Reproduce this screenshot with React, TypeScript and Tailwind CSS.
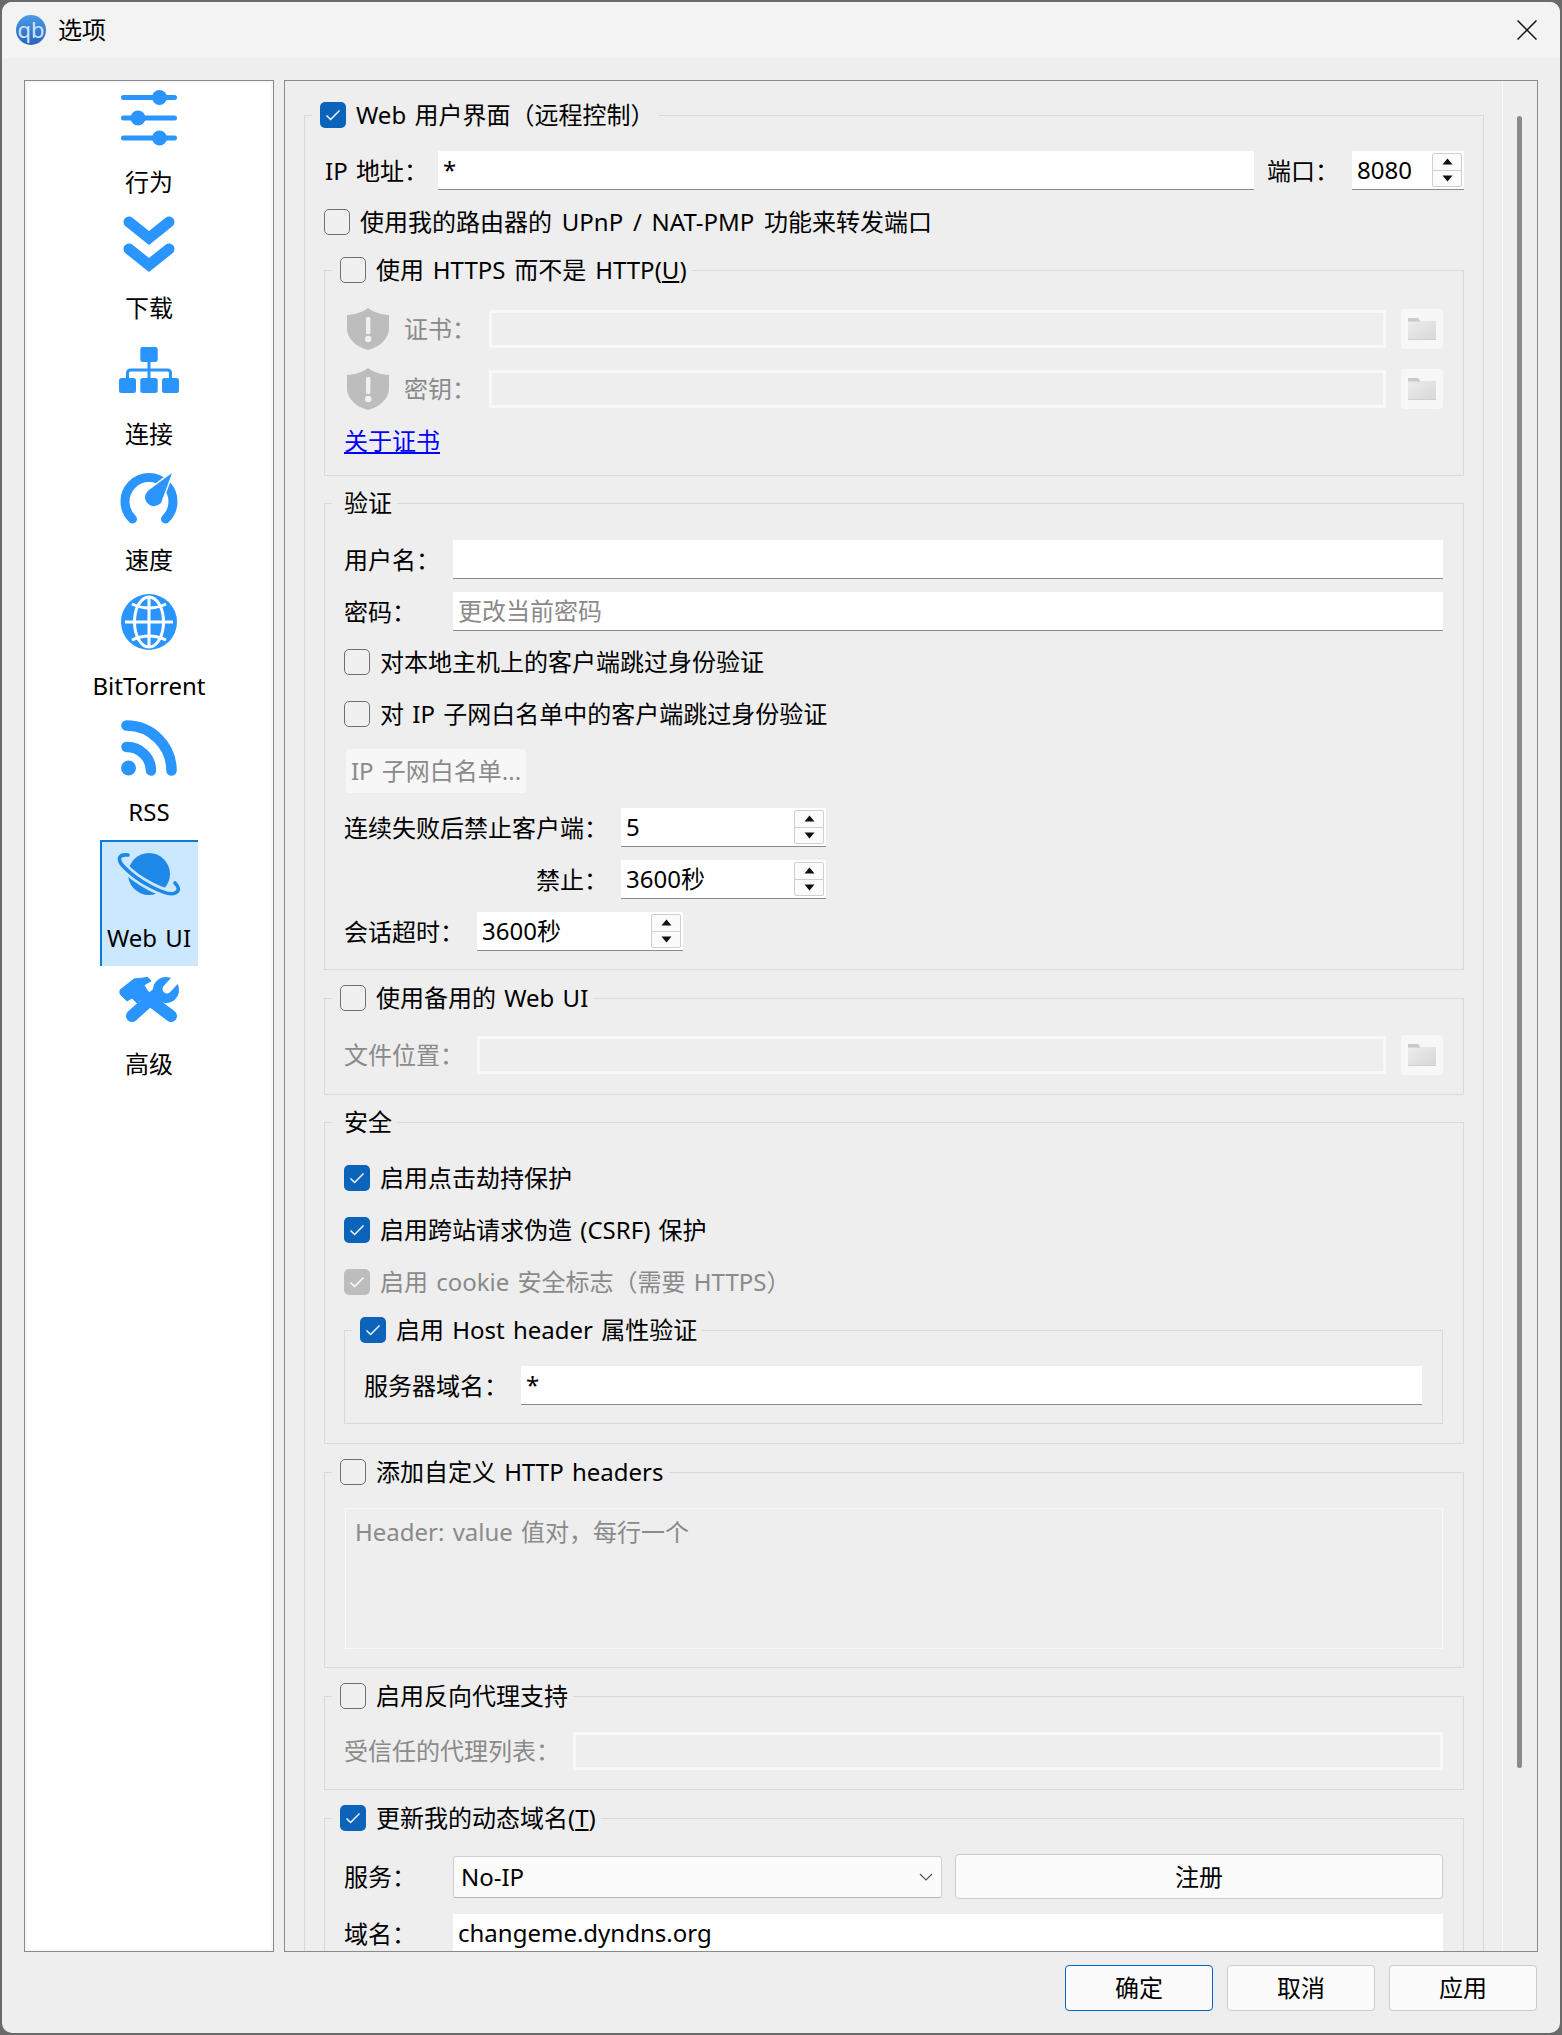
import React from "react";

const BLUE = "#2a94ff";

function Check({ on, disabled }: { on?: boolean; disabled?: boolean }) {
  if (on) {
    return (
      <span className={`flex h-[26px] w-[26px] shrink-0 items-center justify-center rounded-[5px] ${disabled ? "bg-[#bdbdbd]" : "bg-[#0b63ba]"}`}>
        <svg width="16" height="12" viewBox="0 0 16 12" fill="none" stroke="#fff" strokeWidth="1.4">
          <path d="M1.5 6.5L5.6 10.5L14.5 1.5" />
        </svg>
      </span>
    );
  }
  return <span className="block h-[26px] w-[26px] shrink-0 rounded-[5px] border-[1.5px] border-[#707070] bg-[#f0f0f0]" />;
}

function CheckRow({ on, disabled, children, className }: { on?: boolean; disabled?: boolean; children: React.ReactNode; className?: string }) {
  return (
    <div className={`flex h-[26px] items-center ${className ?? ""}`}>
      <Check on={on} disabled={disabled} />
      <span className={`ml-[10px] whitespace-nowrap ${disabled ? "text-[#8a8a8a]" : ""}`}>{children}</span>
    </div>
  );
}

function Group({ title, check, on, className, children }: { title: React.ReactNode; check?: boolean; on?: boolean; className?: string; children: React.ReactNode }) {
  return (
    <fieldset className={`min-w-0 border border-[#d9d9d9] ${className ?? ""}`}>
      <legend className={`ml-[7px] flex h-[26px] items-center pr-[5px] ${check ? "pl-[8px]" : "pl-[12px]"}`}>
        {check && <Check on={on} />}
        <span className={`whitespace-nowrap ${check ? "ml-[10px]" : ""}`}>{title}</span>
      </legend>
      <div className="pl-[19px] pr-[20px]">{children}</div>
    </fieldset>
  );
}

function Field({ text, placeholder, className }: { text?: string; placeholder?: string; className?: string }) {
  return (
    <div className={`flex h-[39px] items-center border-b border-[#8a8a8a] bg-white pl-[5px] ${placeholder ? "text-[#8a8a8a]" : ""} ${className ?? ""}`}>
      {text ?? placeholder}
    </div>
  );
}

function DisabledField({ className }: { className?: string }) {
  return <div className={`h-[38px] border-[3px] border-[#f8f8f8] bg-[#eeeeee] ${className ?? ""}`} />;
}

function Spin({ text, className }: { text: string; className?: string }) {
  return (
    <div className={`flex h-[39px] items-center justify-between border-b border-[#8a8a8a] bg-white pl-[5px] pr-[2px] ${className ?? ""}`}>
      <span>{text}</span>
      <div className="flex h-[34px] w-[30px] flex-col rounded-[2px] border border-[#cfcfcf] bg-[#fbfbfb]">
        <div className="flex flex-1 items-center justify-center border-b border-[#cfcfcf]">
          <svg width="11" height="7" viewBox="0 0 11 7"><path d="M5.5 0.5L10.5 6.5H0.5Z" fill="#111" /></svg>
        </div>
        <div className="flex flex-1 items-center justify-center">
          <svg width="11" height="7" viewBox="0 0 11 7"><path d="M5.5 6.5L10.5 0.5H0.5Z" fill="#111" /></svg>
        </div>
      </div>
    </div>
  );
}

function FolderButton({ className }: { className?: string }) {
  return (
    <div className={`ml-[15px] flex h-[40px] w-[42px] shrink-0 items-center justify-center rounded-[4px] bg-[#f7f7f7] ${className ?? ""}`}>
      <svg width="28" height="22" viewBox="0 0 28 22">
        <defs>
          <linearGradient id="fg" x1="0" y1="0" x2="1" y2="1">
            <stop offset="0" stopColor="#ececec" />
            <stop offset="1" stopColor="#d8d8d8" />
          </linearGradient>
        </defs>
        <rect x="0" y="3" width="28" height="19" fill="url(#fg)" />
        <path d="M0 0.8Q0 0 1 0H10L12.5 3.5H0Z" fill="#c9c9c9" />
        <rect x="0" y="21" width="28" height="1" fill="#cfcfcf" />
      </svg>
    </div>
  );
}

function Shield() {
  return (
    <svg className="ml-[3px] mr-[15px] shrink-0" width="42" height="42" viewBox="0 0 42 42">
      <path d="M21 0C27 4.5 34 6.5 42 7V20C42 31 33 38.5 21 42C9 38.5 0 31 0 20V7C8 6.5 15 4.5 21 0Z" fill="#bdbdbd" />
      <rect x="19" y="9" width="4.4" height="17" rx="1.6" fill="#f0f0f0" />
      <circle cx="21.2" cy="31" r="3.2" fill="#f0f0f0" />
    </svg>
  );
}

function PushButton({ children, primary, className }: { children: React.ReactNode; primary?: boolean; className?: string }) {
  return (
    <div className={`flex items-center justify-center rounded-[4px] border bg-[#fbfbfb] ${primary ? "border-[#0067c0]" : "border-[#cccccc]"} ${className ?? ""}`}>
      {children}
    </div>
  );
}

function NavItem({ label, selected, y, children }: { label: string; selected?: boolean; y: number; children: React.ReactNode }) {
  return (
    <div className={`flex h-[126px] w-[98px] flex-col items-center ${selected ? "bg-[#cce8ff] shadow-[inset_2px_2px_0_#0a7bd8]" : ""}`}>
      <svg width="64" height="64" viewBox={`116 ${y} 64 64`} className="shrink-0">
        {children}
      </svg>
      <span className="mt-[19px] whitespace-nowrap">{label}</span>
    </div>
  );
}

function Sidebar() {
  return (
    <div className="h-[1872px] w-[250px] shrink-0 border border-[#8a8a8a] bg-[#f6f6f6] p-[2px]">
      <div className="flex h-full flex-col items-center bg-white pt-px">
        <NavItem label="行为" y={84}>
          <g stroke={BLUE} strokeWidth="5" strokeLinecap="round">
            <path d="M122.5 97.5H173.5M122.5 118H173.5M122.5 138H173.5" />
          </g>
          <g fill={BLUE}>
            <circle cx="158.5" cy="97.5" r="7.5" />
            <circle cx="137" cy="118" r="7.5" />
            <circle cx="158.5" cy="138" r="7.5" />
          </g>
        </NavItem>
        <NavItem label="下载" y={210}>
          <g fill="none" stroke={BLUE} strokeWidth="11" strokeLinecap="round" strokeLinejoin="miter">
            <path d="M128 222L148 238L168 222" />
            <path d="M128 249L148 265L168 249" />
          </g>
        </NavItem>
        <NavItem label="连接" y={336}>
          <g fill={BLUE}>
            <rect x="139.3" y="347" width="17.4" height="15" rx="2.5" />
            <rect x="118" y="378" width="17" height="15" rx="2.5" />
            <rect x="139.3" y="378" width="17.4" height="15" rx="2.5" />
            <rect x="161" y="378" width="17" height="15" rx="2.5" />
          </g>
          <path d="M148 360V380M126.5 380V373Q126.5 370 129.5 370H166.5Q169.5 370 169.5 373V380" fill="none" stroke={BLUE} strokeWidth="3" />
        </NavItem>
        <NavItem label="速度" y={462}>
          <path d="M131.5 519A24 24 0 1 1 164.5 519" fill="none" stroke={BLUE} strokeWidth="9" strokeLinecap="round" />
          <path d="M171 473L160 503Q156 507 151 506Q145 504 144 498Q144 493 148 490Z" fill={BLUE} stroke="#fff" strokeWidth="3" paintOrder="stroke" />
        </NavItem>
        <NavItem label="BitTorrent" y={588}>
          <circle cx="148" cy="622" r="28" fill={BLUE} />
          <g fill="none" stroke="#fff" strokeWidth="3">
            <path d="M124 622H172M148 598V646" />
            <ellipse cx="148" cy="622" rx="14.5" ry="25" />
            <path d="M131 604Q148 612 165 604M131 640Q148 632 165 640" />
          </g>
        </NavItem>
        <NavItem label="RSS" y={714}>
          <circle cx="127.5" cy="768" r="7.5" fill={BLUE} />
          <path d="M125.5 725.5A45 45 0 0 1 170.5 770.5M125.5 747A24 24 0 0 1 150 770.5" fill="none" stroke={BLUE} strokeWidth="10.5" strokeLinecap="round" />
        </NavItem>
        <NavItem label="Web UI" selected y={840}>
          <circle cx="148" cy="874" r="21" fill="#1e88e8" />
          <path d="M127 855C117 854 116 860 123 867C136 881 166 897 174 893C179 891 178 887 174 883" fill="none" stroke="#cce8ff" strokeWidth="9" />
          <path d="M127 855C117 854 116 860 123 867C136 881 166 897 174 893C179 891 178 887 174 883" fill="none" stroke="#1e88e8" strokeWidth="3.6" strokeLinecap="round" />
        </NavItem>
        <NavItem label="高级" y={966}>
          <path d="M141 994L170 1016" stroke={BLUE} strokeWidth="12" strokeLinecap="round" />
          <path d="M119 990L133 979L147 977.5L150 981L143 985L147 992L136 1003L131 998L126 1001L119 994Z" fill={BLUE} strokeLinejoin="round" stroke={BLUE} strokeWidth="1" />
          <path d="M131 1016L160 990" stroke={BLUE} strokeWidth="12" strokeLinecap="round" />
          <circle cx="165" cy="990" r="13" fill={BLUE} />
          <path d="M166 989L176 978" stroke="#fff" strokeWidth="9" strokeLinecap="round" />
        </NavItem>
      </div>
    </div>
  );
}

function Content() {
  return (
    <div className="w-[1217px] shrink-0 pl-[19px] pr-[18px] pt-[21px]">
      <fieldset className="min-w-0 border border-[#d9d9d9]">
        <legend className="ml-[7px] flex h-[26px] items-center pl-[8px] pr-[5px]">
          <Check on />
          <span className="ml-[10px] whitespace-nowrap">Web 用户界面（远程控制）</span>
        </legend>
        <div className="px-[19px]">
          <div className="mt-[23px] flex items-center">
            <span className="w-[114px] shrink-0 pl-px">IP 地址：</span>
            <Field text="*" className="flex-1" />
            <span className="ml-[13px] w-[85px] shrink-0">端口：</span>
            <Spin text="8080" className="w-[112px] shrink-0" />
          </div>

          <CheckRow className="mt-[19px] [word-spacing:3.5px]">使用我的路由器的 UPnP / NAT-PMP 功能来转发端口</CheckRow>

          <Group check title={<>使用 HTTPS 而不是 HTTP(<u>U</u>)</>} className="mt-[22px] pb-[22px] [word-spacing:2.6px]">
            <div className="mt-[25px] flex h-[42px] items-center text-[#8a8a8a]">
              <Shield />
              <span className="w-[85px] shrink-0">证书：</span>
              <DisabledField className="flex-1" />
              <FolderButton />
            </div>
            <div className="mt-[18px] flex h-[42px] items-center text-[#8a8a8a]">
              <Shield />
              <span className="w-[85px] shrink-0">密钥：</span>
              <DisabledField className="flex-1" />
              <FolderButton />
            </div>
            <div className="mt-[19px] h-[24px] leading-[24px] text-[#0000ff] underline">关于证书</div>
          </Group>

          <Group title="验证" className="mt-[14px] pb-[18px]">
            <div className="mt-[24px] flex items-center">
              <span className="w-[109px] shrink-0">用户名：</span>
              <Field className="flex-1" text="" />
            </div>
            <div className="mt-[13px] flex items-center">
              <span className="w-[109px] shrink-0">密码：</span>
              <Field className="flex-1" placeholder="更改当前密码" />
            </div>
            <CheckRow className="mt-[18px]">对本地主机上的客户端跳过身份验证</CheckRow>
            <CheckRow className="mt-[26px]">对 IP 子网白名单中的客户端跳过身份验证</CheckRow>
            <div className="ml-[2px] mt-[22px] flex h-[44px] w-[180px] items-center justify-center rounded-[4px] bg-[#f7f7f7] text-[#8a8a8a]">IP 子网白名单...</div>
            <div className="mt-[15px] flex items-center">
              <span className="mr-[13px] w-[264px] shrink-0">连续失败后禁止客户端：</span>
              <Spin text="5" className="w-[205px]" />
            </div>
            <div className="mt-[13px] flex items-center">
              <span className="mr-[13px] w-[264px] shrink-0 text-right">禁止：</span>
              <Spin text="3600秒" className="w-[205px]" />
            </div>
            <div className="mt-[13px] flex items-center">
              <span className="w-[133px] shrink-0">会话超时：</span>
              <Spin text="3600秒" className="w-[206px]" />
            </div>
          </Group>

          <Group check title="使用备用的 Web UI" className="mt-[15px] pb-[19px]">
            <div className="mt-[24px] flex h-[40px] items-center text-[#8a8a8a]">
              <span className="w-[133px] shrink-0">文件位置：</span>
              <DisabledField className="flex-1" />
              <FolderButton />
            </div>
          </Group>

          <Group title="安全" className="mt-[14px] pb-[19px]">
            <CheckRow on className="mt-[30px]">启用点击劫持保护</CheckRow>
            <CheckRow on className="mt-[26px]">启用跨站请求伪造 (CSRF) 保护</CheckRow>
            <CheckRow on disabled className="mt-[26px]">启用 cookie 安全标志（需要 HTTPS）</CheckRow>
            <Group check on title="启用 Host header 属性验证" className="mt-[22px] pb-[18px]">
              <div className="mt-[23px] flex items-center">
                <span className="w-[157px] shrink-0">服务器域名：</span>
                <Field text="*" className="flex-1" />
              </div>
            </Group>
          </Group>

          <Group check title="添加自定义 HTTP headers" className="mt-[15px] pb-[18px]">
            <div className="ml-px mt-[23px] h-[141px] border border-[#f8f8f8] pl-[9px] pt-[8px] text-[#8a8a8a]">Header: value 值对，每行一个</div>
          </Group>

          <Group check title="启用反向代理支持" className="mt-[15px] pb-[19px]">
            <div className="mt-[23px] flex items-center text-[#8a8a8a]">
              <span className="w-[229px] shrink-0">受信任的代理列表：</span>
              <DisabledField className="flex-1" />
            </div>
          </Group>

          <Group check on title={<>更新我的动态域名(<u>T</u>)</>} className="mt-[15px] pb-[19px]">
            <div className="mt-[23px] flex h-[45px] items-center">
              <span className="w-[109px] shrink-0">服务：</span>
              <div className="flex h-[42px] w-[489px] shrink-0 items-center justify-between rounded-[3px] border border-[#cfcfcf] border-b-[#b5b5b5] bg-[#fbfbfb] pl-[7px] pr-[8px]">
                <span>No-IP</span>
                <svg width="14" height="8" viewBox="0 0 14 8" fill="none" stroke="#555" strokeWidth="1.2"><path d="M1 1L7 7L13 1" /></svg>
              </div>
              <PushButton className="ml-[13px] h-[45px] flex-1">注册</PushButton>
            </div>
            <div className="mt-[15px] flex items-center">
              <span className="w-[109px] shrink-0">域名：</span>
              <Field text="changeme.dyndns.org" className="flex-1" />
            </div>
          </Group>
        </div>
      </fieldset>
    </div>
  );
}

export default function App() {
  return (
    <div className="h-[2035px] w-[1562px] overflow-hidden bg-[#6a6a6a] p-[2px] font-['Noto_Sans','Noto_Sans_CJK_SC',sans-serif] text-[24px] leading-[30px] text-black [word-spacing:2px]">
      <div className="flex h-[2031px] w-[1558px] flex-col overflow-hidden rounded-[10px] bg-[#eeeeee]">
        <div className="flex h-[56px] shrink-0 items-center justify-between bg-[#f3f3f3] pl-[14px] pr-[23px]">
          <div className="flex items-center">
            <span className="flex h-[30px] w-[30px] items-center justify-center rounded-full bg-gradient-to-b from-[#4a9be8] to-[#2a62bd] pb-[3px] text-[22px] leading-none text-[#cfe3fa]">qb</span>
            <span className="ml-[12px]">选项</span>
          </div>
          <svg width="20" height="20" viewBox="0 0 20 20" stroke="#111" strokeWidth="1.5"><path d="M0.5 0.5L19.5 19.5M19.5 0.5L0.5 19.5" /></svg>
        </div>
        <div className="flex gap-[10px] pl-[22px] pt-[22px]">
          <Sidebar />
          <div className="flex h-[1872px] w-[1254px] shrink-0 overflow-hidden border border-[#8a8a8a]">
            <div className="w-[1217px] shrink-0 overflow-hidden"><Content /></div>
            <div className="flex-1 border-l border-[#f8f8f8] pl-[14px] pt-[35px]">
              <div className="h-[1652px] w-[5px] rounded-full bg-[#8a8a8a]" />
            </div>
          </div>
        </div>
        <div className="mt-[13px] flex justify-end gap-[14px] pr-[23px]">
          <PushButton primary className="h-[46px] w-[148px]">确定</PushButton>
          <PushButton className="h-[46px] w-[148px]">取消</PushButton>
          <PushButton className="h-[46px] w-[148px]">应用</PushButton>
        </div>
      </div>
    </div>
  );
}
